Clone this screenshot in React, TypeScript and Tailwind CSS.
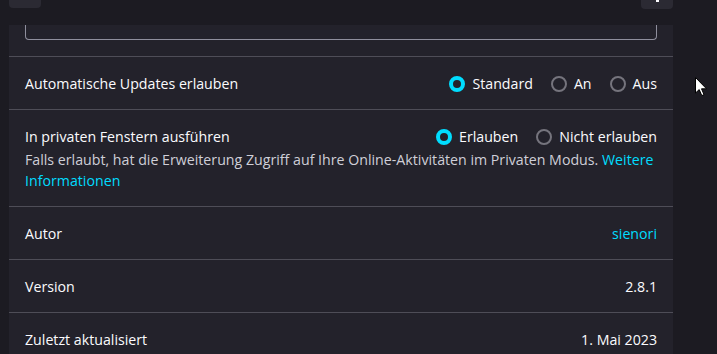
import React from "react";

function Radio({ checked, label }: { checked?: boolean; label: string }) {
  return (
    <label className="flex items-center gap-[7px]">
      <span
        className={
          checked
            ? "box-border block w-4 h-4 rounded-full border-4 border-[#00ddff] bg-[#23222b]"
            : "box-border block w-4 h-4 rounded-full border-2 border-[#75747d] bg-[#23222b]"
        }
      />
      <span>{label}</span>
    </label>
  );
}

function Row({ label, value, link }: { label: string; value: string; link?: boolean }) {
  return (
    <div className="flex items-center justify-between border-t border-[#4e4d57] px-4 pt-[17px] pb-[15px] leading-[20px]">
      <span>{label}</span>
      <span className={link ? "text-[#00ddff]" : ""}>{value}</span>
    </div>
  );
}

export default function App() {
  return (
    <div
      className="relative w-[717px] h-[354px] overflow-hidden bg-[#1c1b22] text-[#fbfbfe] text-[14.2px]"
      style={{ fontFamily: '"Open Sans", "Noto Sans", sans-serif' }}
    >
      <div className="flex justify-between pl-[9px] pr-[44px] h-[25px]">
        <div className="w-[32px] h-[32px] mt-[-24px] rounded-[4px] bg-[#2b2a33]" />
        <div className="w-[32px] h-[32px] mt-[-23px] rounded-[4px] bg-[#2b2a33] flex items-end justify-center pb-[7px]">
          <div className="w-[3px] h-[3px] bg-[#fbfbfe] ml-[1px]" />
        </div>
      </div>
      <div className="ml-[9px] w-[664px] bg-[#23222b]">
        <div className="px-4 pb-4">
          <div className="h-[15px] border-x border-b border-[#8f8f9d] rounded-b-[4px]" />
        </div>
        <div className="flex items-center justify-between border-t border-[#4e4d57] px-4 pt-[17px] pb-[15px] leading-[20px]">
          <span>Automatische Updates erlauben</span>
          <div className="flex items-center gap-[18px]">
            <Radio checked label="Standard" />
            <Radio label="An" />
            <Radio label="Aus" />
          </div>
        </div>
        <div className="border-t border-[#4e4d57] px-4 pt-[17px] pb-[15px]">
          <div className="flex items-center justify-between leading-[20px]">
            <span>In privaten Fenstern ausführen</span>
            <div className="flex items-center gap-[18px]">
              <Radio checked label="Erlauben" />
              <Radio label="Nicht erlauben" />
            </div>
          </div>
          <p className="mt-[2px] leading-[21px] text-[#cfcfd8]">
            Falls erlaubt, hat die Erweiterung Zugriff auf Ihre Online-Aktivitäten im Privaten Modus.{" "}
            <a className="text-[#00ddff]">Weitere</a>{" "}
            <a className="text-[#00ddff]">Informationen</a>
          </p>
        </div>
        <Row label="Autor" value="sienori" link />
        <Row label="Version" value="2.8.1" />
        <Row label="Zuletzt aktualisiert" value="1. Mai 2023" />
      </div>
      <svg
        className="absolute left-[695px] top-[77px]"
        width="13"
        height="20"
        viewBox="0 0 13 20"
      >
        <path
          d="M0.5 0.5 L0.5 16 L4.2 12.6 L6.8 18.6 L9 17.6 L6.5 11.8 L11.5 11.8 Z"
          fill="#ffffff"
          stroke="#000000"
          strokeWidth="1"
          strokeLinejoin="round"
        />
      </svg>
    </div>
  );
}
